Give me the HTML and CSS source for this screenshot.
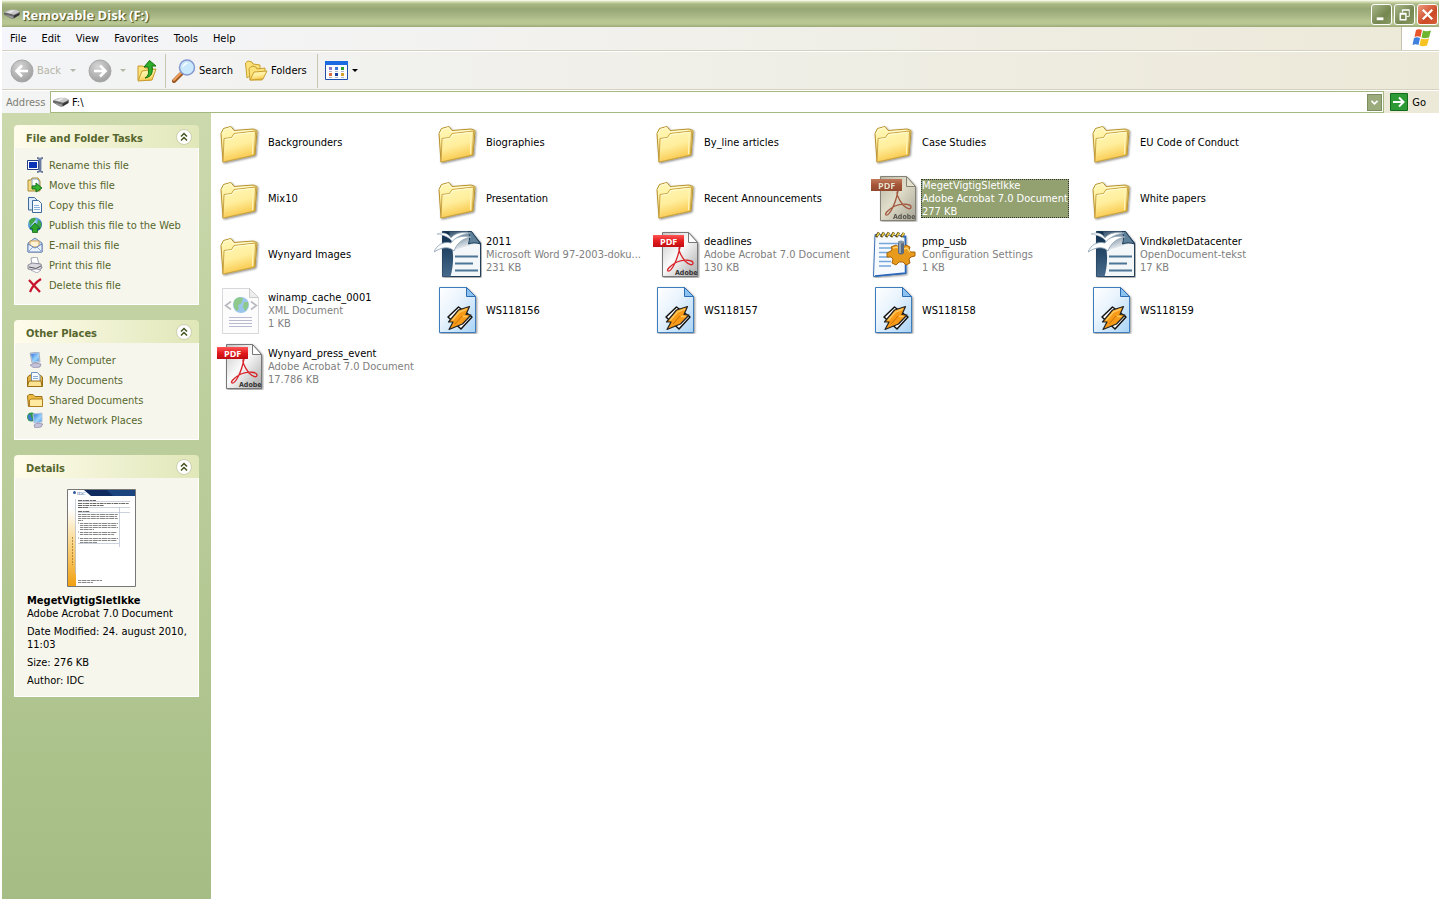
FILE: index.html
```html
<!DOCTYPE html>
<html lang="en">

<head>
  <meta charset="UTF-8" />
  <meta name="viewport" content="width=device-width, initial-scale=1.0" />
  <title>Removable Disk (F:)</title>
  <link rel="stylesheet" href="styles.css">
</head>

<body>
  <!-- shared icons -->
  <svg class="sprite" aria-hidden="true">
    <defs>
      <linearGradient id="gFolder" x1="0" y1="0" x2="0.3" y2="1">
        <stop offset="0" stop-color="#fff8b8" />
        <stop offset="0.55" stop-color="#ffee9c" />
        <stop offset="1" stop-color="#f9c84c" />
      </linearGradient>
      <linearGradient id="gPage" x1="0" y1="0" x2="1" y2="1">
        <stop offset="0" stop-color="#fff" />
        <stop offset="0.4" stop-color="#eaf4fd" />
        <stop offset="1" stop-color="#a9d3f5" />
      </linearGradient>
      <linearGradient id="gPdf" x1="0" y1="0" x2="1" y2="1">
        <stop offset="0" stop-color="#c4c4c4" />
        <stop offset="0.45" stop-color="#fafafa" />
        <stop offset="1" stop-color="#a8a8a8" />
      </linearGradient>
      <linearGradient id="gRed" x1="0" y1="0" x2="0" y2="1">
        <stop offset="0" stop-color="#f55" />
        <stop offset="0.5" stop-color="#e31c1f" />
        <stop offset="1" stop-color="#c00d12" />
      </linearGradient>
      <linearGradient id="gNavy" x1="0" y1="0" x2="0" y2="1">
        <stop offset="0" stop-color="#0c2c4a" />
        <stop offset="1" stop-color="#476a8c" />
      </linearGradient>
      <linearGradient id="gSky" x1="0" y1="0" x2="0.6" y2="1">
        <stop offset="0" stop-color="#1e3f5c" />
        <stop offset="1" stop-color="#f4f7fa" />
      </linearGradient>
      <radialGradient id="gGlobe" cx="0.35" cy="0.3" r="0.8">
        <stop offset="0" stop-color="#d8efff" />
        <stop offset="0.5" stop-color="#4e9de0" />
        <stop offset="1" stop-color="#164b9c" />
      </radialGradient>
      <radialGradient id="gGrey" cx="0.4" cy="0.3" r="0.8">
        <stop offset="0" stop-color="#d6d6d6" />
        <stop offset="1" stop-color="#989898" />
      </radialGradient>
      <linearGradient id="gScreen" x1="0" y1="0" x2="1" y2="1">
        <stop offset="0" stop-color="#2a6fd8" />
        <stop offset="0.6" stop-color="#9ad4fb" />
        <stop offset="1" stop-color="#4a94e8" />
      </linearGradient>
      <linearGradient id="gGold" x1="0" y1="0" x2="0" y2="1">
        <stop offset="0" stop-color="#fff" />
        <stop offset="0.5" stop-color="#fad27c" />
        <stop offset="1" stop-color="#f0a010" />
      </linearGradient>
      <filter id="soft" x="-20%" y="-20%" width="150%" height="150%">
        <feDropShadow dx="1" dy="1" stdDeviation="0.8" flood-color="#000" flood-opacity="0.45" />
      </filter>
    </defs>

    <symbol id="drive" viewBox="0 0 16 10">
      <path d="M0 3.500 6 1h6l4 2-1 3-5 3.500-3 0L0 5.500z" fill="#666" />
      <path d="M0 3.300 6 .8h6l4 2-6 3z" fill="#c9c9c9" />
      <path d="M1 5.500 9 7.500v2L6.500 9z" fill="#999" />
      <path d="M3 3.300 8 1.500h3L6 4z" fill="#eee" />
      <path d="M10 6.500 15.500 4v2L10 9z" fill="#333" />
    </symbol>

    <symbol id="folder" viewBox="1 -1 48 48">
      <g filter="url(#soft)">
        <path d="M6 14.500 8.500 9.500 16 7.500l3 4L38 10l4 1.500L40 36 8 43z" fill="url(#gFolder)" stroke="#b8912c" />
        <path d="M7 15 9.500 10.500 15.500 8.500 18.500 13 37 11.500" fill="none" stroke="#fffbd8" />
        <path d="M9 19.500 16.500 18.500 19 14.500 40.500 12 39.500 36 8 43z" fill="url(#gFolder)" stroke="#c9a445" />
        <path d="M10 20.500 17 19.500 20 15.500 38 13.500" fill="none" stroke="#fffcd6" />
        <path d="M38 14 37.500 35" stroke="#fff6c0" />
      </g>
    </symbol>

    <symbol id="winamp" viewBox="0 0 48 48">
      <g filter="url(#soft)">
        <path d="M5.500 1.500h27l9 9v36h-36z" fill="url(#gPage)" stroke="#3b7dbd" />
      </g>
      <path d="M32.500 1.500v9h9z" fill="#8cc2f0" stroke="#2b6cb3" />
      <path d="M14 31 24.500 21 38 31 27 43z" fill="#fff" stroke="#111" stroke-width="1.500" stroke-linejoin="round" />
      <path d="M24.500 24 35.500 20.500 32 28.500 37 29 28.500 38 15 43.500 19 36 14.500 36z" fill="#f79a17" stroke="#222" stroke-width="1.200" stroke-linejoin="round" />
      <path d="M18 34.500 25.500 26 33 23M29 30.500 33.500 30.500" fill="none" stroke="#ffc65a" stroke-width="1.500" />
      <path d="M28 30 21 38" stroke="#c96f08" />
    </symbol>

    <symbol id="writer" viewBox="0 0 48 48">
      <g filter="url(#soft)">
        <path d="M8.500 1.500H37L46.500 13v33.500h-38z" fill="#f4f7fa" stroke="#233e58" />
      </g>
      <path d="M8.500 1.500H37L41 14 20 20z" fill="url(#gSky)" />
      <path d="M8.500 1.500H15C19 18 21 30 16.500 46.500h-8z" fill="url(#gNavy)" />
      <path d="M34 1.500h3.500L46.500 14C42 12.500 38 12.500 34.500 14 36 9 36 5 34 1.500z" fill="#5f8199" stroke="#1b3b57" />
      <path d="M21 26.500h23M21 33.500h18M21 40.500h23" stroke="#4c7696" stroke-width="2.200" />
      <path d="M3 4c6-2 11-1 14 4 4-5 10-6 19-5-8 1-14 4-17 9-4-5-9-7-16-8z" fill="#fff" stroke="#9fb3c4" stroke-width=".7" />
      <path d="M0 22c3-7 9-11 17-9 4-6 11-8 20-6-9 2-14 6-17 14-5-5-12-4-20 1z" fill="#fff" stroke="#8ea5b8" stroke-width=".9" />
    </symbol>

    <symbol id="pdf" viewBox="0 0 48 48">
      <g filter="url(#soft)">
        <path d="M10.500 2.500h26l9 10v34h-35z" fill="url(#gPdf)" stroke="#777" />
      </g>
      <path d="M36.500 2.500v10h9z" fill="#fff" stroke="#777" />
      <path d="M28 17c-3 1 1 9 5 14 4 4 8 5 8 2s-9-4-16-1c-6 3-11 8-9 9 3 1 9-9 12-24z" fill="none" stroke="#d9232a" stroke-width="1.300" />
      <path d="M1 5h31v12H1z" fill="url(#gRed)" />
      <text class="icon-pdf" x="8" y="14.500">PDF</text>
      <text class="icon-adobe" x="23" y="45">Adobe</text>
    </symbol>

    <symbol id="ini" viewBox="0 0 48 48">
      <g filter="url(#soft)">
        <path d="M5 4.500 35 6 36 43.500 3.500 46.500z" fill="#f6faff" stroke="#3d6fb5" />
      </g>
      <path d="M33 7 35.500 6.500V43L5 46" fill="none" stroke="#2b67b8" stroke-width="1.500" />
      <path d="M9 13.500h20M9 18h14M9 22.500h11M9 27h10M9 31.500h12M9 36h12" stroke="#76a7dc" stroke-width="1.300" />
      <path d="M6 7 9 2.500M11 7 14 2.500M16 7 19 2.500M21 7 24 2.500M26 7 29 2.500M31 7 34 3" stroke="#5b4b12" stroke-width="2.800" />
      <path d="M7 6 9 3M12 6 14 3M17 6 19 3M22 6 24 3M27 6 29 3M32 6 34 3" stroke="#e8cc4c" stroke-width="1.600" />
      <path d="m26 15 3 2h4l3-2 4 2-1 3 2 2 4 0v4l-4 1-2 2 1 4-4 2-3-3-4 0-3 3-4-2 1-4-2-2-4 0v-4l4-2 1-2-1-2z" fill="#e89a1d" stroke="#a86408" />
      <path d="M23 18l4-1 3 3 7-2 3 4" fill="none" stroke="#ffd36b" stroke-width="1.500" />
      <path d="M28 12h6v11c-2 2-4 2-6 0z" fill="#596b80" />
      <path d="M30 13v10" stroke="#aebdcc" stroke-width="1.500" />
      <ellipse cx="31" cy="12" rx="3" ry="1.500" fill="#8797a8" />
    </symbol>

    <symbol id="xml" viewBox="0 0 48 48">
      <path d="M6.500 2.500h27l9 9v36h-36z" fill="#fcfcfd" stroke="#d8d8dc" />
      <path d="M33.500 2.500v9h9z" fill="#eee" stroke="#ccc" />
      <circle cx="25" cy="19" r="8" fill="#9cc5ee" />
      <path d="M18 15c3-5 8-4 9-2l-2 5-3 1 1 4-2 2c-3-2-4-6-3-10zM28 16l4 0c1 3 0 6-3 9l-2-4z" fill="#8cc98b" />
      <path d="M15 15.500 9.500 19.500 15 23.500M35 15.500 40.500 19.500 35 23.500" fill="none" stroke="#b8b9bf" stroke-width="1.600" />
      <path d="M13 31.500h23M13 34.500h23M13 37.500h23M13 40.500h23" stroke="#b9bad1" />
    </symbol>

    <symbol id="chevron" viewBox="0 0 18 18">
      <circle cx="9" cy="9" r="7.500" fill="#fff" stroke="#cdd0b0" />
      <path d="M6 8.500 9 5.500 12 8.500M6 12.500 9 9.500 12 12.500" fill="none" stroke="#45551f" stroke-width="1.500" />
    </symbol>

    <symbol id="pc" viewBox="0 0 16 16">
      <path d="M3 1 12 0 13 10 5 11z" fill="#cfd8e6" stroke="#8490a8" stroke-width=".6" />
      <path d="M4 2 11.500 1 12 9 5.500 10z" fill="url(#gScreen)" />
      <path d="M3 13 8 11l6 1-1 3-6 1z" fill="#c5c3da" stroke="#7c7a9c" stroke-width=".6" />
    </symbol>
  </svg>

  <header class="titlebar">
    <svg class="title-icon"><use href="#drive" /></svg>
    <h1>Removable Disk (F:)</h1>
    <div class="window-buttons">
      <button type="button" aria-label="Minimize"><svg viewBox="0 0 20 20"><path d="M5 14.500h7" stroke="#fff" stroke-width="3" /></svg></button>
      <button type="button" aria-label="Restore"><svg viewBox="0 0 20 20"><path d="M8 8V5h7v7h-3M7 5.500h8" fill="none" stroke="#fff" /><path d="M5.500 9.500h6v6h-6zM5 9h7" fill="none" stroke="#fff" stroke-width="1.500" /></svg></button>
      <button class="close" type="button" aria-label="Close"><svg viewBox="0 0 20 20"><path d="M5 5 15 15M15 5 5 15" stroke="#fff" stroke-width="2.400" /></svg></button>
    </div>
  </header>

  <nav class="menubar" aria-label="Menu">
    <button type="button">File</button>
    <button type="button">Edit</button>
    <button type="button">View</button>
    <button type="button">Favorites</button>
    <button type="button">Tools</button>
    <button type="button">Help</button>
    <div class="throbber">
      <svg viewBox="0 0 20 18">
        <path d="M4 1c2-1 4-1 6 0L8.500 8C6.500 7 4.500 7 2.500 8z" fill="#e8542c" />
        <path d="M11 1.500c2 1 5 1 8 0L17 8.500c-3 1-5 1-7.500 0z" fill="#6fb52f" />
        <path d="M2 9c2-1 4-1 6 0L6.500 16C4.500 15 2.500 15 .5 16z" fill="#3f80de" />
        <path d="M9 9.500c3 1 5 1 8 0L15 16.500c-3 1-5 1-7.500 0z" fill="#f7c321" />
      </svg>
    </div>
  </nav>

  <div class="toolbar" role="toolbar" aria-label="Standard buttons">
    <button class="tool back" type="button" disabled>
      <svg class="round" viewBox="0 0 24 24"><circle cx="12" cy="12" r="11" fill="url(#gGrey)" stroke="#a8a8a8" /><path d="M18 12H7M12 6.500 6.500 12 12 17.500" fill="none" stroke="#fff" stroke-width="2.600" /></svg>
      Back
      <span class="caret"></span>
    </button>
    <button class="tool forward" type="button" disabled aria-label="Forward">
      <svg class="round" viewBox="0 0 24 24"><circle cx="12" cy="12" r="11" fill="url(#gGrey)" stroke="#a8a8a8" /><path d="M6 12h11M12 6.500 17.500 12 12 17.500" fill="none" stroke="#fff" stroke-width="2.600" /></svg>
      <span class="caret"></span>
    </button>
    <button class="tool up" type="button" aria-label="Up">
      <svg viewBox="0 0 24 24">
        <path d="M3 7h5l2 2h8l-2 12H3z" fill="#fbe27a" stroke="#c69a2c" />
        <path d="M3 22 7 12l14-2-4 11z" fill="url(#gFolder)" stroke="#c69a2c" />
        <path d="M10 19c4-2 4-6 3-11H9L14.500 1.500 21 7h-4c1 6 0 11-7 12z" fill="#2fae2b" stroke="#12720f" />
      </svg>
    </button>
    <span class="divider"></span>
    <button class="tool search" type="button">
      <svg viewBox="0 0 24 24">
        <path d="M2 22 10 14" stroke="#9a5522" stroke-width="4" stroke-linecap="round" />
        <path d="M2 21 9.500 13.500" stroke="#f0a15c" stroke-width="2" stroke-linecap="round" />
        <circle cx="15" cy="8.500" r="7.500" fill="#cbe9fd" stroke="#8599d0" stroke-width="1.500" />
        <path d="M10.500 9c0-4 3-6 6-5-2 1-4 2-6 5z" fill="#fff" />
      </svg>
      Search
    </button>
    <button class="tool folders" type="button">
      <svg viewBox="0 0 24 24">
        <path d="M1.500 4 4 2l4 1 1 2 7 1v3L3 19z" fill="#fbe27a" stroke="#c99f2f" />
        <path d="M5 9.500 8 7l4 1 1 2 8-1v3l-3 9-12 0z" fill="#fbe27a" stroke="#c99f2f" />
        <path d="M6 21 10 13l13-1-4 8z" fill="url(#gFolder)" stroke="#c99f2f" />
      </svg>
      Folders
    </button>
    <span class="divider"></span>
    <button class="tool views" type="button" aria-label="Views">
      <svg viewBox="0 0 24 20">
        <path d="M.5.5h22v18H.5z" fill="#fdfdff" stroke="#1c4fae" />
        <path d="M0 0h23v4H0z" fill="#1c6ae0" />
        <path d="M4 6h3v3H4z" fill="#8d7ad0" /><path d="M10 6h3v3h-3z" fill="#3974dd" /><path d="M16 6h3v3h-3z" fill="#2f9d3a" />
        <path d="M4 12h3v3H4z" fill="#e06b42" /><path d="M10 12h3v3h-3z" fill="#1b3f9e" /><path d="M16 12h3v3h-3z" fill="#d4a12c" />
        <path d="M4 10.500h3M10 10.500h3M16 10.500h3M4 16.500h3M10 16.500h3M16 16.500h3" stroke="#aeb6c8" />
      </svg>
      <span class="caret"></span>
    </button>
  </div>

  <form class="addressbar">
    <label for="address">Address</label>
    <div class="address-box">
      <svg><use href="#drive" /></svg>
      <input type="text" id="address" value="F:\" />
      <button class="drop" type="button" aria-label="Show addresses"><svg viewBox="0 0 15 17"><path d="M4 6.500 7.500 10 11 6.500" fill="none" stroke="#fff" stroke-width="2" /></svg></button>
    </div>
    <button class="go" type="button">
      <svg viewBox="0 0 18 18"><path d="M.5.500h17v17H.5z" fill="#2d9a35" stroke="#156b1d" /><path d="M3 9h10M9 4.500 13.500 9 9 13.500" fill="none" stroke="#fff" stroke-width="2" /></svg>
      Go
    </button>
  </form>

  <div class="explorer">
    <aside class="sidebar">
      <section class="panel">
        <div class="panel-head">
          <h2>File and Folder Tasks</h2>
          <button type="button" aria-label="Collapse File and Folder Tasks"><svg><use href="#chevron" /></svg></button>
        </div>
        <ul class="panel-body">
          <li><a href="#">
            <svg viewBox="0 0 16 16"><path d="M.5 3.500h11v9H.5z" fill="#fff" stroke="#223e80" /><path d="M2 5h8v6H2z" fill="#0a33b5" /><path d="M10 1c2 0 2.500.5 2.500 2v10.500c0 1.500-.5 1.500-2.500 1.500M16 1c-2 0-2.500.5-2.500 2v10.500c0 1.500.5 1.500 2.500 1.500" fill="none" stroke="#6a7ba2" stroke-width="1.800" /></svg>
            Rename this file</a></li>
          <li><a href="#">
            <svg viewBox="0 0 16 16"><path d="M1 3h3l1-2h6l2 3v10H1z" fill="#f5dc82" stroke="#a98c3a" /><path d="M5 2h5l2 2v5H5z" fill="#fff" stroke="#8fa6c4" /><path d="M5 9h4V6l6 5-6 4v-3H5z" fill="#36b430" stroke="#15701a" /></svg>
            Move this file</a></li>
          <li><a href="#">
            <svg viewBox="0 0 16 16"><path d="M1.500.5h6L11 4v9H1.500z" fill="#dcebfb" stroke="#40699c" /><path d="M5.500 3.500h6l3 3v9h-9z" fill="#f5faff" stroke="#40699c" /><path d="M7 8.500h5M7 10.500h6M7 12.500h6" stroke="#8bb2dc" /></svg>
            Copy this file</a></li>
          <li><a href="#">
            <svg viewBox="0 0 16 16"><circle cx="8" cy="7.500" r="7" fill="url(#gGlobe)" /><path d="M2 4c3-4 6-3 7-2L7 5 3 9zM11 3c3 1 4 4 3 8l-4-3z" fill="#43a548" /><path d="M5.500 15.500v-4H3L8 6l5 5.500h-2.500v4z" fill="#2fa42b" stroke="#116818" stroke-width=".8" /></svg>
            Publish this file to the Web</a></li>
          <li><a href="#">
            <svg viewBox="0 0 16 16"><path d="M1 6 8 1l7 5v9H1z" fill="#c3daf6" stroke="#6680ae" /><path d="M3 4h9v6H3z" fill="#fff2d5" stroke="#d5a050" /><path d="M1 7 8 11 15 7v8H1z" fill="#e7f2fe" stroke="#6680ae" /><path d="M1 15 6 10M15 15 10 10" stroke="#87a5d0" /></svg>
            E-mail this file</a></li>
          <li><a href="#">
            <svg viewBox="0 0 16 16"><path d="M4 1 10 0 12 7 5 8z" fill="#fff" stroke="#8a93a5" stroke-width=".8" /><path d="M1 8 5 6l9 1 1 4-5 3-9-2z" fill="#d8d8de" stroke="#777788" stroke-width=".8" /><path d="M2 10 9 11.500 14 9" fill="none" stroke="#555" /><path d="M4 13 9 12l5 1-4 3z" fill="#fff" stroke="#8a8aa0" stroke-width=".7" /></svg>
            Print this file</a></li>
          <li><a href="#">
            <svg viewBox="0 0 16 16"><path d="M2 3 13 15M14 2C9 5 5 10 3 15" fill="none" stroke="#c8142c" stroke-width="2.200" /></svg>
            Delete this file</a></li>
        </ul>
      </section>

      <section class="panel">
        <div class="panel-head">
          <h2>Other Places</h2>
          <button type="button" aria-label="Collapse Other Places"><svg><use href="#chevron" /></svg></button>
        </div>
        <ul class="panel-body">
          <li><a href="#"><svg><use href="#pc" /></svg>My Computer</a></li>
          <li><a href="#">
            <svg viewBox="0 0 16 16"><path d="M.5 5 3 3h10l2.500 2v9.500H.5z" fill="#e2b33e" stroke="#9a6f17" /><path d="M4.500.5h6l2.500 3V11h-8.500z" fill="#f3f9ff" stroke="#6e93c2" /><path d="M6 4.500h5M6 6.500h5" stroke="#87add8" /><path d="M.5 14.500 2 9h12l1 5.500z" fill="#fbe391" stroke="#9a6f17" /></svg>
            My Documents</a></li>
          <li><a href="#">
            <svg viewBox="0 0 16 16"><path d="M.5 4 2 2.500h4L8 4.500h7v10H1.500z" fill="#edbb42" stroke="#9a6f17" /><path d="M2.500 14.500V8l2-1h11v7.500z" fill="#ffea9f" stroke="#b07e1c" /></svg>
            Shared Documents</a></li>
          <li><a href="#">
            <svg viewBox="0 0 16 16"><circle cx="4.500" cy="5" r="4.500" fill="#2f9a47" /><path d="M1 3c2-2 3 0 3 2l2 3c-2 2-5 0-5-3z" fill="#3c7bd0" /><path d="M6 2 15 1v9l-8 1z" fill="url(#gScreen)" stroke="#b7c5dc" /><path d="M7 13 10 11l6 1-2 3-6 1z" fill="#c5c3da" stroke="#7c7a9c" stroke-width=".6" /></svg>
            My Network Places</a></li>
        </ul>
      </section>

      <section class="panel">
        <div class="panel-head">
          <h2>Details</h2>
          <button type="button" aria-label="Collapse Details"><svg><use href="#chevron" /></svg></button>
        </div>
        <div class="panel-body details">
          <svg class="thumb" viewBox="0 0 69 98">
            <path d="M.5.5h68v97H.5z" fill="#fff" />
            <path d="M1 20h8v77H1z" fill="url(#gGold)" />
            <path d="M17 1h51v6H24z" fill="#0f2a5e" />
            <path d="M40 1h28v6H46z" fill="#1c4580" />
            <circle cx="7.500" cy="3.500" r="1.500" fill="#335a9c" />
            <text class="icon-idc" x="10" y="5.500">IDC</text>
            <path d="M5.500 48v28" stroke="#a87830" stroke-dasharray="2 1" stroke-width=".8" />
            <path d="M8.500 10v75M52.500 18v40M11 12.500h52M11 18.500h52M11 23.500h52M11 54.500h41" stroke="#b5bfd0" stroke-width=".7" />
            <path d="M11 11.500h18M11 14.500h51M11 16.500h26M11 18.500h10M11 22.500h12" stroke="#666" stroke-dasharray="4 .7 2 .5" />
            <path d="M11 25.500h40M11 27.500h39M11 29.500h40M11 31.500h5M13 34.500h38M13 36.500h37M13 38.500h38M13 40.500h14M13 43.500h37M13 45.500h34M13 49.500h38M13 51.500h37M13 53.500h17M11 34h1M11 43h1M11 49h1M11 91.500h24M11 93.500h15" stroke="#888" stroke-dasharray="3 .6 5 .6" />
            <path d="M.5.5h68v97H.5z" fill="none" stroke="#777" />
          </svg>
          <p><strong>MegetVigtigSletIkke</strong><br>Adobe Acrobat 7.0 Document</p>
          <p>Date Modified: 24. august 2010, 11:03</p>
          <p>Size: 276 KB</p>
          <p>Author: IDC</p>
        </div>
      </section>
    </aside>

    <main>
      <ul class="files">
        <li><svg><use href="#folder" /></svg><p>Backgrounders</p></li>
        <li><svg><use href="#folder" /></svg><p>Biographies</p></li>
        <li><svg><use href="#folder" /></svg><p>By_line articles</p></li>
        <li><svg><use href="#folder" /></svg><p>Case Studies</p></li>
        <li><svg><use href="#folder" /></svg><p>EU Code of Conduct</p></li>

        <li><svg><use href="#folder" /></svg><p>Mix10</p></li>
        <li><svg><use href="#folder" /></svg><p>Presentation</p></li>
        <li><svg><use href="#folder" /></svg><p>Recent Announcements</p></li>
        <li class="selected"><svg><use href="#pdf" /></svg><p>MegetVigtigSletIkke<span>Adobe Acrobat 7.0 Document</span><span>277 KB</span></p></li>
        <li><svg><use href="#folder" /></svg><p>White papers</p></li>

        <li><svg><use href="#folder" /></svg><p>Wynyard Images</p></li>
        <li><svg><use href="#writer" /></svg><p>2011<span>Microsoft Word 97-2003-doku...</span><span>231 KB</span></p></li>
        <li><svg><use href="#pdf" /></svg><p>deadlines<span>Adobe Acrobat 7.0 Document</span><span>130 KB</span></p></li>
        <li><svg><use href="#ini" /></svg><p>pmp_usb<span>Configuration Settings</span><span>1 KB</span></p></li>
        <li><svg><use href="#writer" /></svg><p>VindkøletDatacenter<span>OpenDocument-tekst</span><span>17 KB</span></p></li>

        <li><svg><use href="#xml" /></svg><p>winamp_cache_0001<span>XML Document</span><span>1 KB</span></p></li>
        <li><svg><use href="#winamp" /></svg><p>WS118156</p></li>
        <li><svg><use href="#winamp" /></svg><p>WS118157</p></li>
        <li><svg><use href="#winamp" /></svg><p>WS118158</p></li>
        <li><svg><use href="#winamp" /></svg><p>WS118159</p></li>

        <li><svg><use href="#pdf" /></svg><p>Wynyard_press_event<span>Adobe Acrobat 7.0 Document</span><span>17.786 KB</span></p></li>
      </ul>
    </main>
  </div>
</body>

</html>
```
FILE: styles.css
```css
* {
  box-sizing: border-box;
}

body {
  margin: 0;
  min-height: 100vh;
  display: flex;
  flex-direction: column;
  padding-left: 2px;
  background: #fff;
  color: #000;
  font-family: Tahoma, "DejaVu Sans Condensed", "DejaVu Sans", sans-serif;
  font-size: 11px;
  line-height: 13px;
}

button,
input {
  font: inherit;
  color: inherit;
  background: none;
  border: none;
  padding: 0;
}

h1,
h2,
p,
ul {
  margin: 0;
  padding: 0;
}

ul {
  list-style: none;
}

svg {
  display: block;
  flex: none;
}

.sprite {
  position: absolute;
  width: 0;
  height: 0;
}

/* title bar */
.titlebar {
  display: flex;
  align-items: center;
  height: 27px;
  padding: 0 1px 0 2px;
  border-top: 1px solid #f4f6e4;
  background: linear-gradient(#e4ebc8 0, #a9b785 3px, #98a875 8px, #a5b482 14px, #b9c795 20px, #b9c793 23px, #9aa877 26px);
}

.title-icon {
  width: 16px;
  height: 10px;
}

.titlebar h1 {
  flex: 1;
  padding: 1px 0 0 2px;
  color: #fff;
  font-family: "Trebuchet MS", "Open Sans", sans-serif;
  font-size: 13px;
  line-height: 16px;
  text-shadow: 1px 1px 1px #3c4a1c;
}

.window-buttons {
  display: flex;
  gap: 2px;
}

.window-buttons button {
  width: 21px;
  height: 21px;
  border: 1px solid #fff;
  border-radius: 3px;
  background: linear-gradient(135deg, #a9b78a, #75864f 60%, #8b9b66);
}

.window-buttons .close {
  background: linear-gradient(135deg, #ee9a80, #cc4a26 60%, #d8603c);
}

/* menu */
.menubar {
  display: flex;
  align-items: center;
  gap: 15px;
  height: 24px;
  padding-left: 8px;
  background: linear-gradient(90deg, #f5f6fb, #ece9d8);
  border-bottom: 1px solid #d5d1c1;
}

.throbber {
  display: flex;
  align-items: center;
  justify-content: center;
  align-self: stretch;
  width: 38px;
  padding: 0 0 2px 2px;
  margin-left: auto;
  background: #fff;
  border-left: 1px solid #c5c2ac;
}

.throbber svg {
  width: 20px;
  height: 18px;
}

/* toolbar */
.toolbar {
  display: flex;
  align-items: center;
  height: 39px;
  padding-left: 8px;
  background: linear-gradient(90deg, #f3f4f6, #ece9d8);
  border-top: 1px solid #fff;
  border-bottom: 1px solid #d5d1c1;
}

.tool {
  display: flex;
  align-items: center;
  gap: 3px;
}

.tool:disabled {
  color: #b5b5a8;
}

.tool svg {
  width: 24px;
  height: 24px;
}

.caret {
  border: 3px solid transparent;
  border-top-color: currentColor;
  border-bottom: none;
}

.back .caret {
  margin-left: 6px;
}

.forward {
  gap: 8px;
  margin-left: 12px;
}

.up {
  margin: 0 6px 0 9px;
}

.divider {
  width: 1px;
  height: 34px;
  background: #c9c5ae;
}

.search {
  margin-left: 6px;
}

.folders {
  margin: 0 10px 0 11px;
}

.views {
  margin-left: 7px;
}

.views svg {
  height: 20px;
}

/* address */
.addressbar {
  display: flex;
  align-items: center;
  height: 23px;
  padding: 0 13px 0 4px;
  background: linear-gradient(90deg, #f3f4f4, #ece9d8);
  border-top: 1px solid #fff;
}

.addressbar label {
  width: 44px;
  color: #7f7f75;
}

.address-box {
  flex: 1;
  display: flex;
  align-items: center;
  height: 22px;
  padding: 0 1px 0 2px;
  background: #fff;
  border: 1px solid #a4b97f;
}

.address-box svg {
  width: 16px;
  height: 10px;
}

.address-box input {
  flex: 1;
  min-width: 0;
  padding-left: 3px;
  outline: none;
}

.drop {
  border: 1px solid #7d8e5e;
  background: #9bab7b;
}

.address-box .drop svg {
  width: 13px;
  height: 15px;
}

.go {
  display: flex;
  align-items: center;
  gap: 4px;
  margin-left: 6px;
}

.go svg {
  width: 18px;
  height: 18px;
}

/* explorer body */
.explorer {
  flex: 1;
  display: flex;
}

.sidebar {
  flex: none;
  width: 209px;
  padding: 12px;
  display: flex;
  flex-direction: column;
  gap: 15px;
  background: linear-gradient(#ccd9ad, #a5bd84);
}

.panel {
  color: #56662d;
}

.panel-head {
  display: flex;
  align-items: center;
  justify-content: space-between;
  height: 23px;
  padding: 0 6px 0 12px;
  border-radius: 4px 4px 0 0;
  background: linear-gradient(90deg, #fffcec, #e0e7b8);
}

.panel-head h2 {
  padding-top: 3px;
  font-size: 11px;
  line-height: 13px;
}

.panel-head svg {
  width: 18px;
  height: 18px;
}

.panel-body {
  padding: 7px 12px 9px;
  background: #f6f6ec;
  border: 1px solid #fff;
  border-top: none;
}

.panel-body a {
  display: flex;
  align-items: center;
  gap: 6px;
  height: 20px;
  color: inherit;
  text-decoration: none;
  white-space: nowrap;
}

.panel-body a svg {
  width: 16px;
  height: 16px;
}

.details {
  display: flex;
  flex-direction: column;
  gap: 5px;
  padding-top: 11px;
  padding-right: 2px;
  color: #000;
}

.thumb {
  align-self: center;
  width: 69px;
  height: 98px;
  margin: 0 20px 2px 0;
}

/* file tiles */
main {
  flex: 1;
  padding: 1px 5px;
  background: #fff;
}

.files {
  display: grid;
  grid-template-columns: repeat(auto-fill, 218px);
}

.files li {
  display: flex;
  align-items: center;
  gap: 3px;
  height: 56px;
}

.files svg {
  width: 48px;
  height: 48px;
}

.files p {
  min-width: 0;
  padding: 0 1px;
}

.files span {
  display: block;
  overflow: hidden;
  color: #808080;
  text-overflow: ellipsis;
  white-space: nowrap;
}

.files .selected p {
  background: #93a070;
  outline: 1px dotted #333;
  outline-offset: -1px;
  color: #fff;
}

.files .selected span {
  color: #fff;
}

.files .selected svg {
  filter: contrast(0.65) sepia(0.3) hue-rotate(15deg);
}

/* lettering inside icons */
.icon-pdf {
  fill: #fff;
  font: bold 9px "Open Sans", sans-serif;
}

.icon-adobe {
  fill: #333;
  font: bold 7px "DejaVu Sans Condensed", sans-serif;
}

.icon-idc {
  fill: #335a9c;
  font: 5px "Liberation Serif", serif;
}
```
